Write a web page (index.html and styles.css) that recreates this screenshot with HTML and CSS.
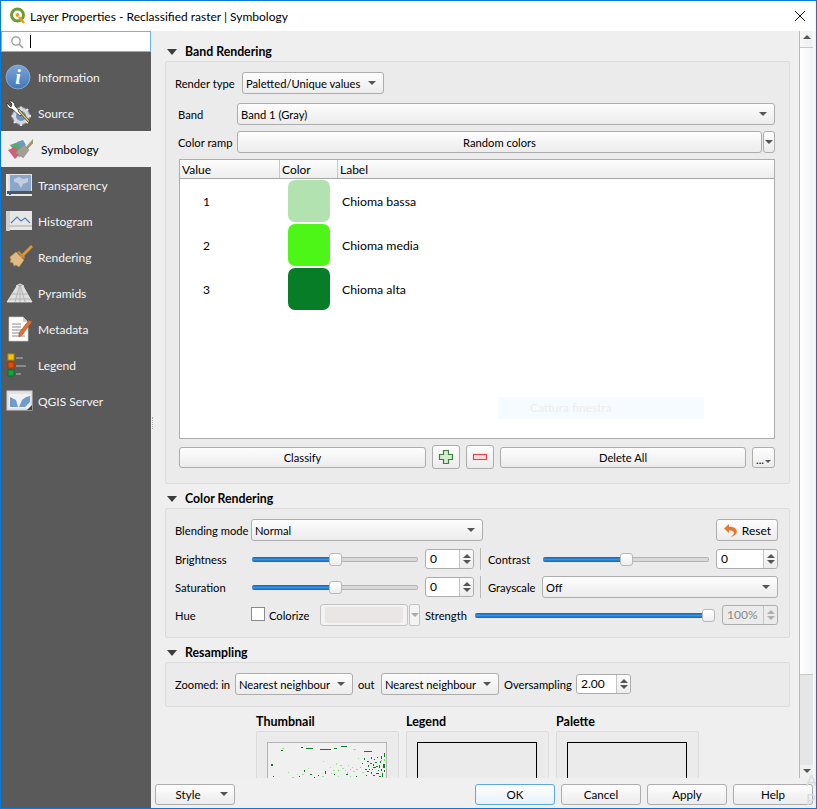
FILE: index.html
```html
<!DOCTYPE html>
<html lang="en">
<head>
<meta charset="utf-8">
<title>Layer Properties</title>
<link rel="stylesheet" href="styles.css">
</head>
<body>
<div class="window">
  <header class="titlebar">
    <svg class="qlogo" width="18" height="18" viewBox="0 0 18 18"><circle cx="8.5" cy="8" r="6" fill="none" stroke="#6b9c2f" stroke-width="3"/><circle cx="8.500" cy="8" r="2" fill="#e0a030"/><path d="M10 10l5 6" stroke="#d9a521" stroke-width="2.600"/></svg>
    <span class="title-text">Layer Properties - Reclassified raster | Symbology</span>
    <svg class="close" width="12" height="12" viewBox="0 0 12 12"><path d="M1 1l10 10M11 1L1 11" stroke="#111" stroke-width="1" fill="none"/></svg>
  </header>
  <div class="body">
    <nav class="sidebar">
      <div class="search">
        <svg width="14" height="14" viewBox="0 0 14 14"><circle cx="6" cy="6" r="4.2" fill="none" stroke="#999" stroke-width="1.3"/><path d="M9 9l4 4" stroke="#999" stroke-width="1.6"/></svg>
        <span class="cursor"></span>
      </div>
      <div class="nav-item">
        <svg class="nav-icon" width="28" height="28" viewBox="0 0 28 28"><defs><linearGradient id="ib" x1="0" y1="0" x2="0" y2="1"><stop offset="0" stop-color="#7aa6da"/><stop offset="1" stop-color="#4577b5"/></linearGradient></defs><circle cx="13" cy="14" r="12" fill="url(#ib)" stroke="#8fb3de" stroke-width=".8"/><text x="13" y="21" class="info-i" text-anchor="middle">i</text></svg>
        <span>Information</span>
      </div>
      <div class="nav-item">
        <svg class="nav-icon" width="28" height="28" viewBox="0 0 28 28"><circle cx="16" cy="17" r="8.500" fill="#d4d8de" stroke="#9a9ea5"/><circle cx="16" cy="17" r="5" fill="#6d93c4"/><path d="M16 7.500v3M16 24v3M6.500 17h3M23 17h3M9 10l2 2M21 22l2 2M9 24l2-2M21 12l2-2" stroke="#dfe2e6" stroke-width="2.400"/><path d="M2 4a5 5 0 0 0 5 6l8 7 2-2-7-8a5 5 0 0 0-6-5l3 3-1 3z" fill="#fff" stroke="#222" stroke-width=".7"/><path d="M13 12l10 11 2 1-1-3-10-11z" fill="#e6c84a" stroke="#3a3a3a" stroke-width=".8"/></svg>
        <span>Source</span>
      </div>
      <div class="nav-item active">
        <svg class="nav-icon" width="28" height="28" viewBox="0 0 28 28"><path d="M5 10l11-4 5 6-11 5z" fill="#5aa86f"/><path d="M12 7l6-2 3 5-5 3z" fill="#6b9cc0"/><path d="M3 15l7-3 5 7-5 5z" fill="#d0607a"/><path d="M20 13l8-9 2 2-8 9z" fill="#a09a6e"/><path d="M13 15l6-5 5 5-6 8-2-2-2 1-1-3-3 0z" fill="#a0a096" stroke="#85857c" stroke-width=".5"/></svg>
        <span>Symbology</span>
      </div>
      <div class="nav-item">
        <svg class="nav-icon" width="28" height="28" viewBox="0 0 28 28"><rect x="2" y="3" width="25" height="19" fill="#e3e3e3"/><rect x="5" y="4" width="21" height="16" fill="#8ba6cb"/><path d="M9 8l5-2 4 2 5-1v4l-5 2-2 4-3-5-4-1z" fill="#c0cee0"/><rect x="1" y="3" width="2" height="22" fill="#ededed"/><rect x="2" y="20" width="25" height="3" fill="#555"/><rect x="2" y="23" width="25" height="2" fill="#e8e8e8"/><rect x="4" y="20" width="2" height="4" fill="#2b5fa8"/></svg>
        <span>Transparency</span>
      </div>
      <div class="nav-item">
        <svg class="nav-icon" width="28" height="28" viewBox="0 0 28 28"><rect x="2" y="4" width="25" height="19" fill="#e6e6e6"/><rect x="1" y="4" width="4" height="20" fill="#cfcfcf"/><path d="M5 19h22" stroke="#aaa"/><path d="M6 16l6-6 4 4 4-3 5 5" fill="none" stroke="#4f7fb5" stroke-width="1.100"/></svg>
        <span>Histogram</span>
      </div>
      <div class="nav-item">
        <svg class="nav-icon" width="28" height="28" viewBox="0 0 28 28"><path d="M15 13L26 2l2 2-11 11z" fill="#d89a3c"/><path d="M5 14l6-5 8 8-5 7-3-2-2 1-1-3-3-1 1-2z" fill="#e0bb88" stroke="#c08a44" stroke-width=".7"/><path d="M12 9l7 7 1-2-6-6z" fill="#c98a38"/></svg>
        <span>Rendering</span>
      </div>
      <div class="nav-item">
        <svg class="nav-icon" width="28" height="28" viewBox="0 0 28 28"><path d="M2 23L12 7h6l9 16z" fill="#dedede" stroke="#eee" stroke-width=".8"/><path d="M15 5l-5 18M15 5l5 18M7 15h16M4 20h22M15 5v18" stroke="#a5a5a5" stroke-width=".7" fill="none"/><path d="M11 7l4-2 4 2" stroke="#efefef" fill="none"/></svg>
        <span>Pyramids</span>
      </div>
      <div class="nav-item">
        <svg class="nav-icon" width="28" height="28" viewBox="0 0 28 28"><path d="M4 2h14l5 5v19H4z" fill="#fff" stroke="#ccc" stroke-width=".7"/><path d="M18 2v5h5z" fill="#cfcfcf"/><path d="M7 9h9M7 12h9M7 15h12M7 18h12M7 21h13" stroke="#8a8a8a"/><path d="M14 18L24 5l3 2-10 13-3 2z" fill="#e0703a" stroke="#a94e22" stroke-width=".6"/></svg>
        <span>Metadata</span>
      </div>
      <div class="nav-item">
        <svg class="nav-icon" width="28" height="28" viewBox="0 0 28 28"><rect x="3" y="3" width="6" height="6" fill="#f5c400" stroke="#b58a10"/><rect x="3" y="11" width="6" height="6" fill="#e84a00" stroke="#a83400"/><rect x="3" y="19" width="6" height="6" fill="#12a33a" stroke="#0b6f28"/><path d="M11 7h7M11 15h10M11 23h5" stroke="#9a9a9a" stroke-width="1.600"/></svg>
        <span>Legend</span>
      </div>
      <div class="nav-item">
        <svg class="nav-icon" width="28" height="28" viewBox="0 0 28 28"><rect x="2" y="4" width="25" height="19" fill="#e4e4e4" stroke="#cfcfcf"/><rect x="4" y="7" width="21" height="14" fill="#f2f2f2"/><path d="M5 10l6 3 2 7H5zM14 20l3-7 4-3 4-1v6l-5 5z" fill="#6f9bd0"/><path d="M22 23l5-5v5z" fill="#444"/></svg>
        <span>QGIS Server</span>
      </div>
    </nav>
    <span class="splitter-dots"></span>
    <div class="content">
      <div class="main">
        <main class="panel">
          <h2 class="section-head first"><i class="down"></i>Band Rendering</h2>
          <section class="group band">
            <div class="row r-render"><label class="l-render">Render type</label><div class="combo w-render">Paletted/Unique values<i class="caret"></i></div></div>
            <div class="row r-band"><label class="l-band">Band</label><div class="combo w-band">Band 1 (Gray)<i class="caret"></i></div></div>
            <div class="row r-ramp"><label class="l-band">Color ramp</label><div class="btn w-ramp">Random colors</div><div class="btn w-ramp-arrow"><i class="caret"></i></div></div>
            <div class="table">
              <div class="thead"><div class="th c-val">Value</div><div class="th c-col">Color</div><div class="th c-lab">Label</div></div>
              <div class="tr"><div class="td-val">1</div><div class="td-col"><div class="swatch s1"></div></div><div class="td-lab">Chioma bassa</div></div>
              <div class="tr"><div class="td-val">2</div><div class="td-col"><div class="swatch s2"></div></div><div class="td-lab">Chioma media</div></div>
              <div class="tr"><div class="td-val">3</div><div class="td-col"><div class="swatch s3"></div></div><div class="td-lab">Chioma alta</div></div>
              <div class="watermark">Cattura finestra</div>
            </div>
            <div class="row r-actions">
              <div class="btn w-classify">Classify</div>
              <div class="btn icon-btn"><svg width="16" height="16" viewBox="0 0 16 16"><path d="M5.500 1.500h5v4h4v5h-4v4h-5v-4h-4v-5h4z" fill="#d8ecd0" stroke="#3f7f3f" stroke-width="1.200"/></svg></div>
              <div class="btn icon-btn"><svg width="16" height="16" viewBox="0 0 16 16"><rect x="1.500" y="5.500" width="13" height="5" fill="#fbe3e3" stroke="#e8484c" stroke-width="1.200"/></svg></div>
              <div class="btn w-delete">Delete All</div>
              <div class="btn w-more"><span class="dots">...</span><i class="caret tiny"></i></div>
            </div>
          </section>

          <h2 class="section-head"><i class="down"></i>Color Rendering</h2>
          <section class="group color">
            <div class="row r-blend"><label class="l-a">Blending mode</label><div class="combo w-blend">Normal<i class="caret"></i></div><div class="btn w-reset"><svg width="15" height="14" viewBox="0 0 15 14"><path d="M6 1L1 5.500 6 10V7.200c3 0 4.500 1 5 2.800-.3 1.600-1.200 2.600-3 3.600 3.600-.4 5.800-2.600 5.800-5.400C13.800 5.300 10.500 3.800 6 3.800z" fill="#e07a33"/></svg>Reset</div></div>
            <div class="row r-slide">
              <label class="l-b">Brightness</label>
              <div class="slider w-s1"><i class="fill half"></i><i class="handle"></i><i class="rest"></i></div>
              <div class="spin w-sp1"><span class="spin-val">0</span><span class="spin-btns"><i class="up"></i><i class="dn"></i></span></div>
              <i class="vline"></i>
              <label class="l-c">Contrast</label>
              <div class="slider w-s1"><i class="fill half"></i><i class="handle"></i><i class="rest"></i></div>
              <div class="spin w-sp2"><span class="spin-val">0</span><span class="spin-btns"><i class="up"></i><i class="dn"></i></span></div>
            </div>
            <div class="row r-slide">
              <label class="l-b">Saturation</label>
              <div class="slider w-s1"><i class="fill half"></i><i class="handle"></i><i class="rest"></i></div>
              <div class="spin w-sp1"><span class="spin-val">0</span><span class="spin-btns"><i class="up"></i><i class="dn"></i></span></div>
              <i class="vline"></i>
              <label class="l-d">Grayscale</label>
              <div class="combo w-gray">Off<i class="caret"></i></div>
            </div>
            <div class="row r-slide">
              <label class="l-a">Hue</label>
              <i class="check"></i>
              <label class="l-e">Colorize</label>
              <div class="colorbtn"><i class="colorfill"></i></div>
              <div class="colorarrow"><i class="caret dim"></i></div>
              <label class="l-f">Strength</label>
              <div class="slider w-s2"><i class="fill full"></i><i class="handle"></i></div>
              <div class="spin w-sp3 disabled"><span class="spin-val">100%</span><span class="spin-btns"><i class="up"></i><i class="dn"></i></span></div>
            </div>
          </section>

          <h2 class="section-head"><i class="down"></i>Resampling</h2>
          <section class="group resample">
            <div class="row r-resample">
              <label class="l-z">Zoomed: in</label>
              <div class="combo w-nn">Nearest neighbour<i class="caret"></i></div>
              <label class="l-out">out</label>
              <div class="combo w-nn">Nearest neighbour<i class="caret"></i></div>
              <label class="l-over">Oversampling</label>
              <div class="spin w-sp4"><span class="spin-val">2.00</span><span class="spin-btns"><i class="up"></i><i class="dn"></i></span></div>
            </div>
          </section>

          <div class="previews">
            <div class="preview">
              <h3>Thumbnail</h3>
              <div class="pbox"><div class="pimg thumb">
                <svg width="118" height="40" viewBox="0 0 118 40">
                  <g fill="#0a7d28"><rect x="33" y="4" width="2" height="1"/><rect x="38" y="5" width="7" height="1"/><rect x="52" y="6" width="11" height="1"/><rect x="66" y="5" width="3" height="1"/><rect x="73" y="3" width="6" height="1"/><rect x="96" y="8" width="8" height="1"/><rect x="13" y="7" width="2" height="1"/><rect x="3" y="21" width="2" height="2"/></g>
                  <g fill="#0a7d28"><rect x="96" y="15" width="1" height="2"/><rect x="99" y="18" width="2" height="1"/><rect x="103" y="14" width="1" height="2"/><rect x="107" y="19" width="2" height="1"/><rect x="113" y="13" width="1" height="3"/><rect x="116" y="10" width="1" height="4"/><rect x="100" y="22" width="1" height="2"/><rect x="105" y="24" width="3" height="1"/><rect x="111" y="22" width="1" height="3"/><rect x="115" y="21" width="2" height="4"/><rect x="97" y="26" width="2" height="1"/><rect x="103" y="29" width="1" height="2"/><rect x="108" y="30" width="3" height="1"/><rect x="114" y="30" width="1" height="4"/><rect x="101" y="26" width="1" height="1"/><rect x="106" y="16" width="1" height="1"/><rect x="110" y="27" width="1" height="1"/><rect x="109" y="14" width="1" height="1"/><rect x="98" y="32" width="1" height="1"/><rect x="36" y="27" width="1" height="2"/><rect x="42" y="31" width="2" height="1"/><rect x="50" y="32" width="1" height="1"/><rect x="57" y="28" width="1" height="3"/><rect x="66" y="31" width="1" height="1"/><rect x="78" y="31" width="2" height="1"/><rect x="88" y="33" width="1" height="1"/><rect x="5" y="33" width="1" height="1"/><rect x="36" y="35" width="1" height="1"/><rect x="60" y="36" width="2" height="1"/><rect x="72" y="35" width="1" height="2"/><rect x="92" y="36" width="3" height="1"/><rect x="46" y="34" width="1" height="1"/><rect x="31" y="33" width="1" height="1"/><rect x="94" y="20" width="1" height="1"/><rect x="102" y="20" width="2" height="1"/><rect x="105" y="21" width="1" height="2"/><rect x="108" y="23" width="2" height="1"/><rect x="112" y="18" width="1" height="2"/><rect x="99" y="28" width="2" height="1"/><rect x="105" y="32" width="2" height="1"/><rect x="111" y="33" width="2" height="1"/><rect x="116" y="27" width="1" height="2"/><rect x="104" y="26" width="1" height="1"/><rect x="113" y="26" width="1" height="2"/><rect x="101" y="35" width="1" height="1"/><rect x="108" y="36" width="2" height="1"/><rect x="84" y="36" width="2" height="1"/></g>
                  <g fill="#9fe39a"><rect x="14" y="5" width="2" height="1"/><rect x="20" y="29" width="1" height="1"/><rect x="24" y="34" width="2" height="1"/><rect x="40" y="25" width="1" height="1"/><rect x="55" y="18" width="1" height="1"/><rect x="62" y="24" width="1" height="1"/><rect x="68" y="20" width="1" height="2"/><rect x="74" y="25" width="2" height="1"/><rect x="80" y="22" width="1" height="1"/><rect x="85" y="28" width="2" height="1"/><rect x="90" y="15" width="1" height="1"/><rect x="82" y="33" width="1" height="1"/><rect x="48" y="36" width="2" height="1"/><rect x="85" y="6" width="3" height="1"/><rect x="29" y="31" width="1" height="1"/><rect x="16" y="35" width="1" height="1"/><rect x="63" y="30" width="1" height="1"/><rect x="70" y="33" width="1" height="1"/><rect x="77" y="27" width="1" height="1"/><rect x="84" y="24" width="1" height="1"/><rect x="72" y="22" width="2" height="1"/><rect x="88" y="26" width="2" height="1"/><rect x="65" y="27" width="2" height="1"/><rect x="79" y="29" width="1" height="2"/><rect x="54" y="33" width="2" height="1"/><rect x="94" y="29" width="2" height="1"/><rect x="34" y="31" width="2" height="1"/><rect x="10" y="37" width="2" height="1"/></g>
                  <g fill="#54f02a"><rect x="70" y="27" width="1" height="1"/><rect x="92" y="24" width="1" height="1"/><rect x="113" y="17" width="1" height="1"/><rect x="76" y="36" width="1" height="1"/><rect x="116" y="16" width="1" height="2"/><rect x="82" y="26" width="1" height="1"/></g>
                </svg>
              </div></div>
            </div>
            <div class="preview"><h3>Legend</h3><div class="pbox"><div class="pimg"></div></div></div>
            <div class="preview"><h3>Palette</h3><div class="pbox"><div class="pimg"></div></div></div>
          </div>
        </main>
        <aside class="scrollbar">
          <div class="sb-up"><i class="sb-tri-up"></i></div>
          <div class="sb-thumb"></div>
          <div class="sb-track"></div>
          <div class="sb-down"><i class="sb-tri-dn"></i></div>
        </aside>
      </div>
      <footer class="buttons">
        <div class="btn w-style">Style<i class="caret style-caret"></i></div>
        <div class="btn w-foot default">OK</div>
        <div class="btn w-foot">Cancel</div>
        <div class="btn w-foot">Apply</div>
        <div class="btn w-foot">Help</div>
      </footer>
    </div>
  </div>
  <div class="ghost">A<br>P</div>
</div>
</body>
</html>
```
FILE: styles.css
```css
* { box-sizing: border-box; }
html, body { margin: 0; padding: 0; background: #fff; }
body { font-family: Lato, Roboto, sans-serif; font-size: 11.2px; color: #000; overflow: hidden; }
i { display: block; font-style: normal; }
label { white-space: nowrap; }

.window { position: relative; width: 817px; height: 809px; border: 1px solid #0a7ad6; display: flex; flex-direction: column; overflow: hidden; background: #fff; }
.titlebar { height: 30px; flex: none; background: #fff; display: flex; align-items: center; padding-left: 8px; }
.qlogo { margin-right: 3px; }
.title-text { font-size: 12px; }
.close { margin-left: auto; margin-right: 10px; }

.body { flex: 1; display: flex; min-height: 0; position: relative; }
.sidebar { width: 150px; flex: none; background: #5a5a5a; color: #f4f4f4; font-size: 12px; }
.search { height: 21px; background: #fff; border: 1px solid #6cb4ee; display: flex; align-items: center; padding-left: 8px; margin-bottom: 7px; }
.cursor { width: 1px; height: 13px; background: #000; margin-left: 6px; }
.nav-item { height: 36px; display: flex; align-items: center; padding-left: 4px; }
.nav-icon { width: 28px; margin-right: 5px; flex: none; }
.info-i { font-family: "Liberation Serif", serif; font-style: italic; font-weight: 700; font-size: 20px; fill: #fff; }
.nav-item.active { background: #efefef; color: #000; }
.nav-item.active span { margin-left: 3px; }
.splitter-dots { position: absolute; left: 151px; top: 386px; width: 1px; height: 12px; border-left: 1px dotted #aaa; }

.content { flex: 1; display: flex; flex-direction: column; min-width: 0; background: #f0f0f0; }
.main { height: 747px; display: flex; }
.panel { width: 648px; overflow: hidden; background: #efefef; }

.section-head { height: 20px; margin: 4px 0 0 16px; padding: 0; font-size: 12.3px; font-weight: 700; display: flex; align-items: center; }
.section-head.first { margin-top: 10px; }
.down { width: 0; height: 0; border-left: 5px solid transparent; border-right: 5px solid transparent; border-top: 6px solid #3c3c3c; margin-right: 8px; margin-top: 2px; }

.group { margin-left: 14px; width: 625px; border: 1px solid #dcdcdc; border-radius: 2px; background: #ebebeb; }
.group.band { height: 423px; }
.group.color { height: 130px; }
.group.resample { height: 45px; }

.row { display: flex; align-items: center; }
.combo, .btn { height: 22px; border: 1px solid #adadad; border-radius: 3px; background: linear-gradient(#fdfdfd, #ececec); display: flex; align-items: center; white-space: nowrap; }
.combo { justify-content: space-between; padding: 0 7px 0 3px; }
.btn { justify-content: center; }
.caret { width: 0; height: 0; border-left: 4px solid transparent; border-right: 4px solid transparent; border-top: 4px solid #555; flex: none; }
.caret.dim { border-top-color: #aaa; }

.r-render { margin: 10px 0 0 9px; }
.l-render { width: 67px; }
.w-render { width: 142px; }
.r-band { margin: 9px 0 0 12px; }
.l-band { width: 59px; }
.w-band { width: 538px; }
.r-ramp { margin: 6px 0 0 12px; }
.w-ramp { width: 525px; }
.w-ramp-arrow { width: 12px; margin-left: 1px; }

.table { position: relative; margin: 6px 0 0 13px; width: 596px; height: 280px; background: #fff; border: 1px solid #adadad; }
.thead { height: 19px; display: flex; background: linear-gradient(#fdfdfd, #eeeeee); border-bottom: 1px solid #a8a8a8; font-size: 12px; }
.th { padding-left: 2px; display: flex; align-items: center; border-right: 1px solid #c8c8c8; }
.c-val { width: 100px; }
.c-col { width: 58px; }
.c-lab { flex: 1; border-right: 0; }
.tr { height: 44px; display: flex; align-items: center; font-size: 12px; }
.td-val { width: 100px; padding-left: 23px; }
.td-col { width: 58px; padding-left: 8px; }
.td-lab { padding-left: 4px; font-size: 12.3px; }
.swatch { width: 42px; height: 42px; border-radius: 7px; }
.s1 { background: #b1e2b0; }
.s2 { background: #4ef618; }
.s3 { background: #077d27; }
.watermark { position: absolute; left: 318px; top: 237px; width: 206px; height: 22px; background: #f6fbff; color: #efecec; padding-left: 32px; line-height: 22px; font-size: 12px; }

.r-actions { margin: 6px 0 0 13px; height: 24px; gap: 6px; }
.w-classify { width: 247px; height: 21px; }
.icon-btn { width: 28px; height: 24px; }
.w-delete { width: 246px; height: 21px; }
.w-more { width: 23px; height: 21px; position: relative; align-items: flex-end; }
.dots { line-height: 14px; margin-right: 1px; }
.caret.tiny { border-left-width: 3px; border-right-width: 3px; border-top-width: 3px; margin-bottom: 4px; }

.r-blend { margin: 10px 0 0 9px; }
.l-a { width: 76px; }
.w-blend { width: 232px; }
.w-reset { width: 62px; margin-left: 233px; gap: 4px; font-size: 12px; }
.r-slide { margin: 6px 0 0 9px; height: 22px; }
.r-blend + .r-slide { margin-top: 7px; }
.l-b { width: 77px; }
.l-c { width: 55px; }
.l-d { width: 54px; }
.l-e { width: 51px; margin-left: 4px; }
.l-f { width: 50px; margin-left: 5px; }

.slider { height: 13px; display: flex; align-items: center; }
.w-s1 { width: 166px; }
.w-s2 { width: 240px; }
.fill { height: 5px; background: linear-gradient(#0a64c0, #3a92e0 50%, #0a64c0); border-radius: 2px 0 0 2px; }
.fill.half { width: 77px; }
.fill.full { width: 228px; }
.rest { flex: 1; height: 5px; background: #d8d8d8; border: 1px solid #b4b4b4; border-left: 0; border-radius: 0 2px 2px 0; }
.handle { width: 13px; height: 13px; background: linear-gradient(#fff, #eee); border: 1px solid #b8b8b8; border-radius: 3px; flex: none; }

.spin { height: 20px; border: 1px solid #adadad; border-radius: 3px; background: #fff; display: flex; }
.w-sp1 { width: 49px; margin-left: 7px; }
.w-sp2 { width: 62px; margin-left: 7px; }
.w-sp3 { width: 56px; margin-left: 7px; }
.w-sp4 { width: 55px; }
.spin-val { flex: 1; padding-left: 4px; line-height: 18px; font-size: 12px; }
.spin-btns { width: 14px; border-left: 1px solid #c4c4c4; background: linear-gradient(#fafafa, #ececec); display: flex; flex-direction: column; align-items: center; justify-content: center; gap: 2px; border-radius: 0 3px 3px 0; }
.up { width: 0; height: 0; border-left: 4px solid transparent; border-right: 4px solid transparent; border-bottom: 4px solid #555; }
.dn { width: 0; height: 0; border-left: 4px solid transparent; border-right: 4px solid transparent; border-top: 4px solid #555; }
.disabled { background: #ebebeb; color: #8a8a8a; }
.disabled .spin-btns { background: #ebebeb; }
.disabled .up { border-bottom-color: #b0b0b0; }
.disabled .dn { border-top-color: #b0b0b0; }
.vline { width: 1px; height: 22px; background: #b8b8b8; margin: 0 7px 0 6px; }
.w-gray { width: 236px; }

.check { width: 14px; height: 14px; border: 1px solid #8a8a8a; background: #fff; margin-top: -2px; }
.colorbtn { width: 88px; height: 22px; border: 1px solid #c4c4c4; border-radius: 3px; background: #f3f3f3; padding: 2px 4px; }
.colorfill { height: 16px; background: #ebe6e6; border-radius: 2px; }
.colorarrow { width: 11px; height: 22px; margin-left: 1px; border: 1px solid #c4c4c4; border-radius: 2px; background: #f3f3f3; display: flex; align-items: center; justify-content: center; }
.colorarrow .caret { border-left-width: 4px; border-right-width: 4px; }

.r-resample { margin: 10px 0 0 9px; }
.l-z { width: 60px; }
.w-nn { width: 118px; }
.l-out { width: 23px; margin-left: 5px; }
.l-over { width: 72px; margin-left: 5px; }

.previews { display: flex; gap: 7px; margin: 6px 0 0 105px; }
.preview { width: 143px; }
.preview h3 { margin: 0; height: 18px; font-size: 12.5px; font-weight: 700; line-height: 18px; }
.pbox { height: 80px; border: 1px solid #dcdcdc; border-radius: 2px; padding: 10px; background: #ebebeb; }
.pimg { width: 120px; height: 60px; border: 1px solid #000; }
.pimg.thumb { border-color: #b4b4b4; background: #f0f0f0; }
.pimg svg { display: block; }

.scrollbar { width: 17px; border-left: 1px solid #b9b9b9; background: linear-gradient(90deg, #f7f7f7, #efefef 75%, #fafafa 80%, #f2f2f2); display: flex; flex-direction: column; padding-right: 3px; }
.sb-up { height: 17px; padding-top: 4px; border-bottom: 1px solid #c8c8c8; }
.sb-tri-up { width: 0; height: 0; margin: 0 auto; border-left: 4px solid transparent; border-right: 4px solid transparent; border-bottom: 4px solid #555; }
.sb-thumb { height: 627px; background: linear-gradient(90deg, #fff, #f3f3f3); border-bottom: 1px solid #c8c8c8; }
.sb-track { flex: 1; background: #e6e6e6; }
.sb-down { height: 13px; padding-top: 4px; background: #f0f0f0; }
.sb-tri-dn { width: 0; height: 0; margin: 0 auto; border-left: 4px solid transparent; border-right: 4px solid transparent; border-top: 4px solid #555; }

.buttons { flex: 1; display: flex; gap: 6px; align-items: flex-start; padding: 6px 3px 0 4px; background: #f0f0f0; font-size: 11.6px; }
.w-style { width: 80px; height: 21px; margin-right: 234px; position: relative; padding-right: 14px; }
.style-caret { position: absolute; right: 6px; top: 7px; }
.w-foot { width: 80px; height: 21px; }
.default { border-color: #5aa7e6; background: linear-gradient(#fff, #e8f1f9); }

.ghost { position: absolute; left: 805px; top: 769px; color: #dcdcdc; font-size: 16px; line-height: 19px; pointer-events: none; }
```
